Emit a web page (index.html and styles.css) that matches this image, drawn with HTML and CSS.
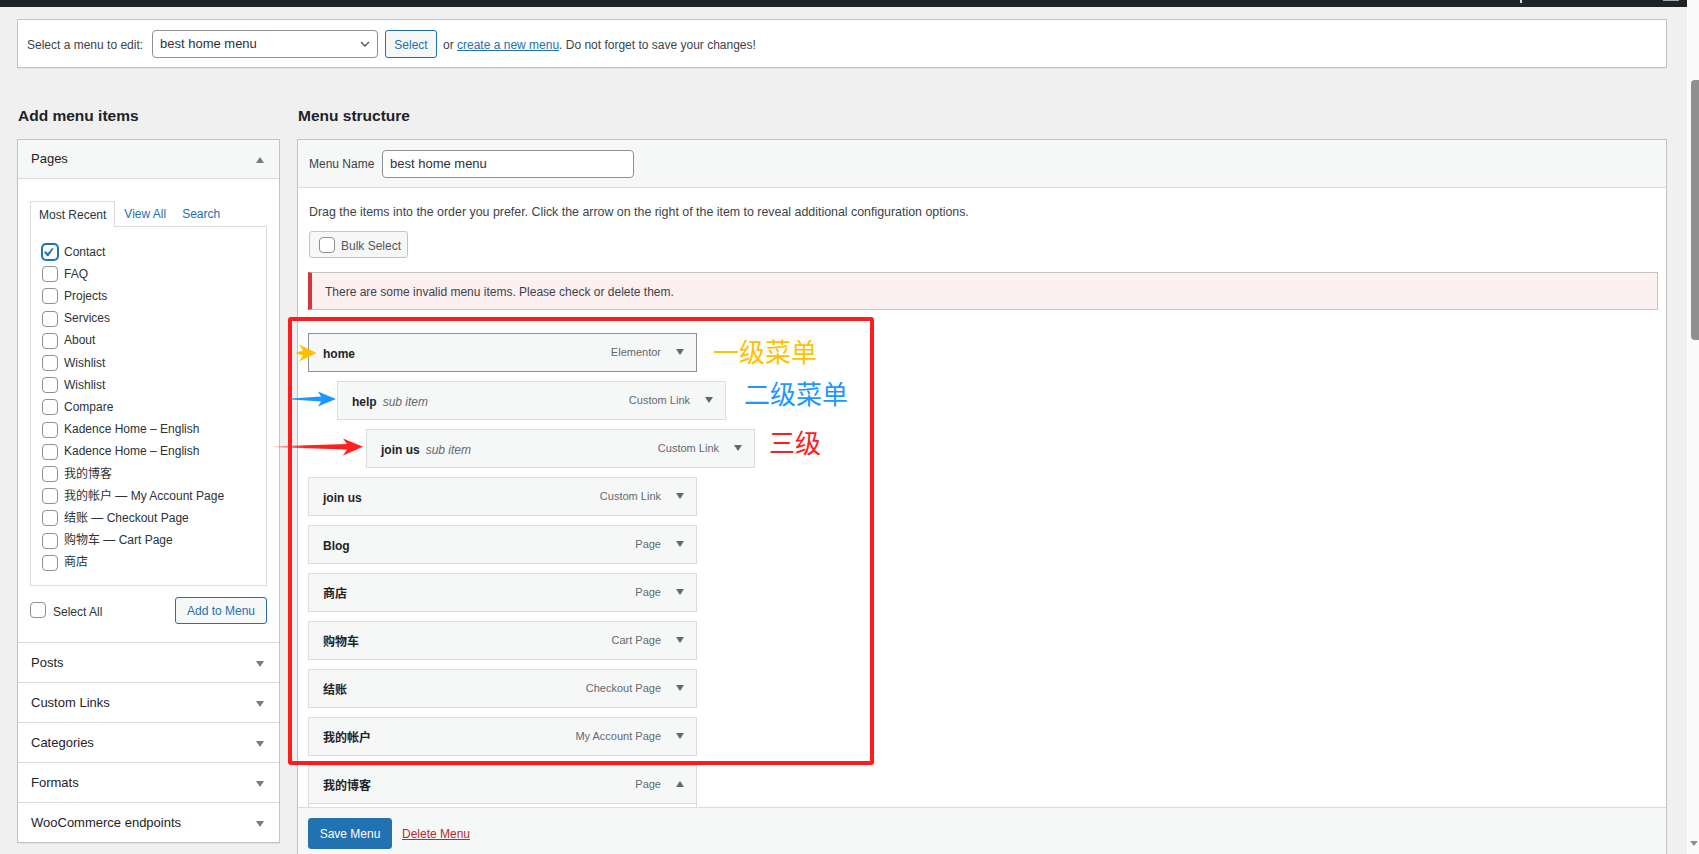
FILE: index.html
```html
<!DOCTYPE html>
<html lang="en">
<head>
<meta charset="utf-8">
<title>Menus</title>
<link rel="stylesheet" href="styles.css">
</head>
<body>
<div class="viewport">
  <div class="page">
    <div class="adminbar"><span class="ab-mark"></span><span class="ab-avatar"></span></div>
    <div class="wrap">
      <div class="manage-menus">
        <span class="mm-label">Select a menu to edit:</span>
        <div class="fake-select">
          <span class="sel-text">best home menu</span>
          <svg class="chev" width="10" height="6" viewBox="0 0 10 6"><polyline points="1,1 5,5 9,1" fill="none" stroke="#50575e" stroke-width="1.4"/></svg>
        </div>
        <span class="btn btn-secondary btn-select">Select</span>
        <span class="mm-text">or <a class="link">create a new menu</a>. Do not forget to save your changes!</span>
      </div>

      <div class="columns">
        <div class="col-left">
          <h2 class="col-title">Add menu items</h2>
          <div class="accordion">
            <div class="acc-section open">
              <div class="acc-title"><span>Pages</span><span class="tri-up"></span></div>
              <div class="acc-body">
                <div class="tabs">
                  <span class="tab active">Most Recent</span>
                  <span class="tab-link">View All</span>
                  <span class="tab-link">Search</span>
                </div>
                <div class="tab-panel">
                  <div class="cb-row"><span class="cb checked"><svg viewBox="0 0 20 20" width="21" height="21"><path d="M14.83 4.89l1.34.94-5.81 8.38H9.02L5.78 9.67l1.34-1.25 2.57 2.4z" fill="#2271b1"/></svg></span><span>Contact</span></div>
                  <div class="cb-row"><span class="cb"></span><span>FAQ</span></div>
                  <div class="cb-row"><span class="cb"></span><span>Projects</span></div>
                  <div class="cb-row"><span class="cb"></span><span>Services</span></div>
                  <div class="cb-row"><span class="cb"></span><span>About</span></div>
                  <div class="cb-row"><span class="cb"></span><span>Wishlist</span></div>
                  <div class="cb-row"><span class="cb"></span><span>Wishlist</span></div>
                  <div class="cb-row"><span class="cb"></span><span>Compare</span></div>
                  <div class="cb-row"><span class="cb"></span><span>Kadence Home – English</span></div>
                  <div class="cb-row"><span class="cb"></span><span>Kadence Home – English</span></div>
                  <div class="cb-row"><span class="cb"></span><span>我的博客</span></div>
                  <div class="cb-row"><span class="cb"></span><span>我的帐户 — My Account Page</span></div>
                  <div class="cb-row"><span class="cb"></span><span>结账 — Checkout Page</span></div>
                  <div class="cb-row"><span class="cb"></span><span>购物车 — Cart Page</span></div>
                  <div class="cb-row"><span class="cb"></span><span>商店</span></div>
                </div>
                <div class="add-row">
                  <label class="select-all"><span class="cb"></span><span class="sa-text">Select All</span></label>
                  <span class="btn btn-secondary btn-add">Add to Menu</span>
                </div>
              </div>
            </div>
            <div class="acc-section"><div class="acc-title"><span>Posts</span><span class="tri-down"></span></div></div>
            <div class="acc-section"><div class="acc-title"><span>Custom Links</span><span class="tri-down"></span></div></div>
            <div class="acc-section"><div class="acc-title"><span>Categories</span><span class="tri-down"></span></div></div>
            <div class="acc-section"><div class="acc-title"><span>Formats</span><span class="tri-down"></span></div></div>
            <div class="acc-section last"><div class="acc-title"><span>WooCommerce endpoints</span><span class="tri-down"></span></div></div>
          </div>
        </div>

        <div class="col-right">
          <h2 class="col-title">Menu structure</h2>
          <div class="menu-box">
            <div class="menu-header">
              <span class="mn-label">Menu Name</span>
              <div class="text-input">best home menu</div>
            </div>
            <div class="menu-body">
              <p class="drag-text">Drag the items into the order you prefer. Click the arrow on the right of the item to reveal additional configuration options.</p>
              <div class="bulk"><span class="cb"></span><span class="bulk-text">Bulk Select</span></div>
              <div class="notice">There are some invalid menu items. Please check or delete them.</div>
              <ul class="menu-list">
                <li class="mi depth-0 active"><span class="mi-title">home</span><span class="mi-type">Elementor</span><span class="tri-down dark"></span></li>
                <li class="mi depth-1"><span class="mi-title">help</span><span class="mi-sub">sub item</span><span class="mi-type">Custom Link</span><span class="tri-down dark"></span></li>
                <li class="mi depth-2"><span class="mi-title">join us</span><span class="mi-sub">sub item</span><span class="mi-type">Custom Link</span><span class="tri-down dark"></span></li>
                <li class="mi depth-0"><span class="mi-title">join us</span><span class="mi-type">Custom Link</span><span class="tri-down dark"></span></li>
                <li class="mi depth-0"><span class="mi-title">Blog</span><span class="mi-type">Page</span><span class="tri-down dark"></span></li>
                <li class="mi depth-0"><span class="mi-title">商店</span><span class="mi-type">Page</span><span class="tri-down dark"></span></li>
                <li class="mi depth-0"><span class="mi-title">购物车</span><span class="mi-type">Cart Page</span><span class="tri-down dark"></span></li>
                <li class="mi depth-0"><span class="mi-title">结账</span><span class="mi-type">Checkout Page</span><span class="tri-down dark"></span></li>
                <li class="mi depth-0"><span class="mi-title">我的帐户</span><span class="mi-type">My Account Page</span><span class="tri-down dark"></span></li>
                <li class="mi depth-0"><span class="mi-title">我的博客</span><span class="mi-type">Page</span><span class="tri-up dark"></span></li>
                <li class="mi-settings"></li>
              </ul>
            </div>
            <div class="menu-footer">
              <span class="btn btn-primary">Save Menu</span>
              <a class="delete-link">Delete Menu</a>
            </div>
          </div>
        </div>
      </div>
    </div>

    <div class="annotations">
      <div class="red-frame"></div>
      <svg class="arrow arrow-gold" width="22" height="18" viewBox="0 0 22 18"><path d="M0 9 L8 6.5 L4 0.5 L21.5 9 L4 17.5 L8 11.5 Z" fill="#ffc000"/></svg>
      <svg class="arrow arrow-blue" width="46" height="16" viewBox="0 0 46 16"><path d="M0 7.4 L30 5.6 L27 0.5 L45 8 L27 15.5 L30 10.4 L0 8.6 Z" fill="#1e96ff"/></svg>
      <svg class="arrow arrow-red" width="90" height="18" viewBox="0 0 90 18">
        <defs><linearGradient id="rg" x1="0" x2="1" y1="0" y2="0"><stop offset="0" stop-color="#ff2020" stop-opacity="0.2"/><stop offset="0.35" stop-color="#ff2020"/></linearGradient></defs>
        <path d="M0 8.3 L73 6 L69 0.5 L89 8.8 L69 17.5 L73 11.6 L0 9.3 Z" fill="url(#rg)"/>
      </svg>
      <span class="ann ann-1">一级菜单</span>
      <span class="ann ann-2">二级菜单</span>
      <span class="ann ann-3">三级</span>
    </div>
  </div>
  <div class="scrollbar">
    <div class="thumb"></div>
    <div class="sb-down"></div>
  </div>
</div>
</body>
</html>
```

FILE: styles.css
```css
* { box-sizing: border-box; }
html, body { margin: 0; height: 854px; overflow: hidden; }
body {
  background: #f0f0f1;
  font-family: "Liberation Sans", "Noto Sans CJK SC", sans-serif;
  font-size: 12px;
  line-height: 1.4;
  color: #3c434a;
}
.viewport { display: flex; height: 854px; }
.page { flex: 1; min-width: 0; position: relative; }

/* scrollbar */
.scrollbar { width: 12px; background: #fafafa; display: flex; flex-direction: column; }
.thumb { margin-top: 80px; margin-left: 4px; height: 260px; background: #8f8f8f; border-radius: 4px 0 0 4px; }
.sb-down { margin-top: auto; margin-bottom: 8px; margin-left: 3px; width: 0; height: 0; border-left: 4px solid transparent; border-right: 4px solid transparent; border-top: 5px solid #8f8f8f; }

/* admin bar */
.adminbar { height: 7px; background: #1d2327; display: flex; align-items: flex-start; }
.ab-mark { width: 2px; height: 3px; background: #dcdcde; margin-left: 1520px; }
.ab-avatar { width: 16px; height: 1px; background: #a7aaad; margin-left: auto; margin-right: 8px; }

.wrap { padding: 0 20px 0 17px; }

/* manage menus bar */
.manage-menus {
  margin-top: 12px;
  height: 49px;
  background: #fff;
  border: 1px solid #c3c4c7;
  box-shadow: 0 1px 1px rgba(0,0,0,.04);
  display: flex;
  align-items: center;
  padding: 1px 9px 0 9px;
  color: #3c434a;
}
.mm-label { width: 125px; flex: none; padding-top: 2px; }
.mm-text { margin-left: 6px; padding-top: 2px; }
.fake-select {
  width: 226px; height: 28px;
  border: 1px solid #8c8f94; border-radius: 4px;
  display: flex; align-items: center; justify-content: space-between;
  padding: 0 7px 0 7px;
  font-size: 13px; color: #2c3338; background: #fff;
}
.sel-text { padding-top: 1px; }
.chev { display: block; }
.btn {
  display: inline-flex; align-items: center; justify-content: center;
  border-radius: 3px; font-size: 12px; white-space: nowrap; padding-top: 2px;
}
.btn-secondary { border: 1px solid #2271b1; color: #2271b1; background: #f6f7f7; }
.btn-select { width: 52px; height: 28px; margin-left: 7px; }
.link { color: #2271b1; text-decoration: underline; }

/* columns */
.columns { display: flex; gap: 17px; margin-top: 38px; align-items: flex-start; }
.col-left { width: 263px; flex: none; }
.col-right { flex: 1; min-width: 0; }
.col-title { margin: 0 0 13px 1px; font-size: 15.5px; line-height: 20px; font-weight: 700; color: #1d2327; }

/* accordion */
.accordion { background: #fff; border: 1px solid #c3c4c7; box-shadow: 0 1px 1px rgba(0,0,0,.06); }
.acc-section { border-bottom: 1px solid #dcdcde; }
.acc-section.last { border-bottom: 0; }
.acc-title {
  height: 39px; display: flex; align-items: center; justify-content: space-between;
  padding: 2px 15px 0 13px; font-size: 13px; color: #1d2327; background: #fff;
}
.acc-section.open .acc-title { background: #f6f7f7; border-bottom: 1px solid #dcdcde; padding-top: 1px; }
.tri-down, .tri-up { width: 0; height: 0; border-left: 4px solid transparent; border-right: 4px solid transparent; }
.tri-down { border-top: 6px solid #787c82; }
.tri-up { border-bottom: 6px solid #787c82; }
.tri-down.dark { border-top-color: #646970; }
.tri-up.dark { border-bottom-color: #646970; }

.acc-body { height: 463px; padding: 22px 12px 0 12px; }
.tabs { display: flex; align-items: stretch; height: 25px; }
.tab {
  display: flex; align-items: center; padding: 2px 8px 0 8px; white-space: nowrap;
  border: 1px solid #dcdcde; border-bottom: 0; background: #fff; color: #2c3338;
  position: relative; z-index: 1; height: 26px;
}
.tab-link { display: flex; align-items: center; color: #2271b1; margin-left: 9px; padding: 2px 7px 0 0; white-space: nowrap; }
.tab-panel { border: 1px solid #dcdcde; height: 360px; padding: 14px 11px 0 11px; }
.cb-row { height: 22.2px; display: flex; align-items: center; color: #2c3338; white-space: nowrap; }
.cb {
  width: 16px; height: 16px; flex: none; border: 1px solid #8c8f94; border-radius: 4px;
  background: #fff; margin-right: 6px; display: inline-flex; overflow: visible;
}
.cb.checked { border-color: #2271b1; box-shadow: 0 0 0 1px #2271b1; }
.cb.checked svg { display: block; margin: -3px 0 0 -4px; }
.add-row { display: flex; align-items: center; justify-content: space-between; margin-top: 11px; height: 27px; }
.select-all { display: flex; align-items: center; color: #2c3338; }
.select-all .cb { margin-right: 7px; }
.sa-text { padding-top: 3px; }
.btn-add { width: 92px; height: 27px; }

/* menu box */
.menu-box { background: #fff; border: 1px solid #c3c4c7; box-shadow: 0 1px 1px rgba(0,0,0,.04); }
.menu-header {
  height: 48px; background: #f6f7f7; border-bottom: 1px solid #dcdcde;
  display: flex; align-items: center; padding: 0 11px;
}
.mn-label { color: #3c434a; width: 73px; flex: none; padding-top: 2px; }
.text-input {
  width: 252px; height: 28px; border: 1px solid #8c8f94; border-radius: 4px; background: #fff;
  display: flex; align-items: center; padding: 1px 7px 0 7px; font-size: 13px; color: #2c3338;
}
.menu-body { height: 619px; overflow: hidden; padding: 14px 8px 0 10px; }
.drag-text { margin: 0 0 0 1px; line-height: 20px; color: #3c434a; font-size: 12.4px; }
.bulk {
  margin: 9px 0 0 1px; width: 99px; height: 27px;
  border: 1px solid #c3c4c7; border-radius: 3px; background: #f6f7f7;
  display: flex; align-items: center; padding-left: 9px; color: #50575e;
}
.bulk-text { padding-top: 3px; }
.notice {
  margin-top: 14px; height: 38px; background: #fcf0f1;
  border: 1px solid #c3c4c7; border-left: 4px solid #d63638;
  display: flex; align-items: center; padding: 2px 0 0 13px; color: #3c434a;
}
.menu-list { list-style: none; margin: 23px 0 0 0; padding: 0; }
.mi {
  width: 389px; height: 39px; margin-top: 9px;
  background: #f6f7f7; border: 1px solid #dcdcde;
  display: flex; align-items: center; padding: 3px 12px 0 14px;
}
.mi:first-child { margin-top: 0; }
.mi.active { border-color: #8c8f94; }
.mi .tri-down, .mi .tri-up { margin-top: -4px; }
.depth-1 { margin-left: 29px; }
.depth-2 { margin-left: 58px; }
.mi-title { font-weight: 700; color: #1d2327; }
.mi-sub { font-style: italic; color: #646970; margin-left: 6px; }
.mi-type { margin-left: auto; margin-right: 15px; font-size: 11px; color: #646970; margin-top: -2px; }
.mi-settings { width: 389px; height: 100px; border: 1px solid #dcdcde; border-top: 0; background: #fff; }

.menu-footer {
  height: 51px; border-top: 1px solid #dcdcde; background: #f6f7f7;
  display: flex; align-items: center; padding: 0 10px;
}
.btn-primary { width: 84px; height: 31px; background: #2271b1; border: 1px solid #2271b1; color: #fff; }
.delete-link { margin-left: 10px; color: #b32d2e; text-decoration: underline; padding-top: 2px; }

/* annotation overlay */
.annotations { position: absolute; left: 0; top: 0; width: 100%; height: 100%; pointer-events: none; }
.red-frame {
  position: absolute; left: 288px; top: 317px; width: 586px; height: 448px;
  border: 4px solid #ff1c1c; border-radius: 3px;
}
.arrow { position: absolute; display: block; }
.arrow-gold { left: 295px; top: 344px; }
.arrow-blue { left: 291px; top: 391px; }
.arrow-red { left: 274px; top: 438px; }
.ann {
  position: absolute; font-family: "Noto Sans CJK SC", sans-serif;
  font-size: 26px; line-height: 26px; white-space: nowrap; letter-spacing: 0;
}
.ann-1 { left: 713px; top: 338px; color: #ffc000; }
.ann-2 { left: 744px; top: 380px; color: #1e96ff; }
.ann-3 { left: 769px; top: 429px; color: #ff1c1c; }
```
